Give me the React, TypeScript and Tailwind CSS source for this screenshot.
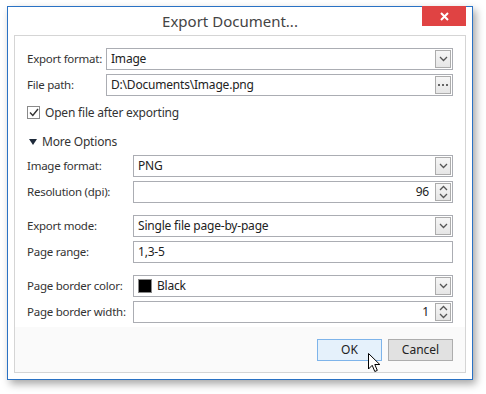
import type { ReactNode } from "react";

function Chevron() {
  return (
    <svg width="9" height="6" viewBox="0 0 9 6" className="text-[#555]">
      <path d="M1 1 L4.5 4.5 L8 1" fill="none" stroke="currentColor" strokeWidth="1.3" />
    </svg>
  );
}

function SideButton({ children }: { children: ReactNode }) {
  return (
    <div className="my-[1px] mr-[1px] flex w-[16px] items-center justify-center border border-[#acacac] bg-gradient-to-b from-[#f6f6f6] to-[#e6e6e6]">
      {children}
    </div>
  );
}

function Box({
  children,
  side,
  right,
}: {
  children?: ReactNode;
  side?: "combo" | "dots" | "spin";
  right?: boolean;
}) {
  return (
    <div className="flex h-[22px] flex-1 border border-[#abadb3] bg-white">
      <div
        className={
          "flex flex-1 items-center whitespace-nowrap px-[4px] text-[12px] tracking-[-0.2px] text-[#222] " +
          (right ? "justify-end pr-[6px]" : "")
        }
      >
        {children}
      </div>
      {side === "combo" && (
        <SideButton>
          <Chevron />
        </SideButton>
      )}
      {side === "dots" && (
        <SideButton>
          <span className="flex gap-[2px]">
            <span className="h-[2px] w-[2px] bg-[#666]" />
            <span className="h-[2px] w-[2px] bg-[#666]" />
            <span className="h-[2px] w-[2px] bg-[#666]" />
          </span>
        </SideButton>
      )}
      {side === "spin" && (
        <SideButton>
          <svg width="9" height="14" viewBox="0 0 9 14" className="text-[#555]">
            <path d="M1 5 L4.5 1.5 L8 5" fill="none" stroke="currentColor" strokeWidth="1.3" />
            <path d="M1 9 L4.5 12.5 L8 9" fill="none" stroke="currentColor" strokeWidth="1.3" />
          </svg>
        </SideButton>
      )}
    </div>
  );
}

function Row({
  label,
  labelW,
  children,
}: {
  label: string;
  labelW: string;
  children: ReactNode;
}) {
  return (
    <div className="flex h-[22px] items-center">
      <div className={labelW + " shrink-0 whitespace-nowrap text-[11.5px] tracking-[-0.25px] text-[#333]"}>
        {label}
      </div>
      {children}
    </div>
  );
}

export default function App() {
  return (
    <div
      className="min-h-[394px] bg-white pl-[7px] pt-[6px]"
      style={{ fontFamily: '"Segoe UI", "Noto Sans", sans-serif' }}
    >
      <div className="relative flex h-[374px] w-[466px] flex-col border border-[#2a72c4] bg-white px-[6px] pb-[6px] shadow-[3px_4px_8px_rgba(0,0,0,0.35)]">
        {/* title bar */}
        <div className="flex h-[28px] shrink-0 items-center justify-center pr-[20px] text-[15px] text-[#444]">
          Export Document...
        </div>
        <div className="absolute right-[6px] top-[-1px] flex h-[20px] w-[44px] items-center justify-center bg-[#e04343]">
          <svg width="9" height="9" viewBox="0 0 9 9">
            <path d="M1 1 L8 8 M8 1 L1 8" stroke="white" strokeWidth="2" />
          </svg>
        </div>

        {/* panel */}
        <div className="flex flex-1 flex-col border border-[#d5d5d5]">
          <div className="flex flex-col bg-white px-[12px] pb-[4px] pt-[12px]">
            <div className="flex flex-col gap-[4px]">
              <Row label="Export format:" labelW="w-[79px]">
                <Box side="combo">Image</Box>
              </Row>
              <Row label="File path:" labelW="w-[79px]">
                <Box side="dots">D:\Documents\Image.png</Box>
              </Row>
            </div>

            <div className="mt-[10px] flex h-[13px] items-center gap-[5px] text-[12px] tracking-[-0.2px] text-[#333]">
              <div className="flex h-[13px] w-[13px] items-center justify-center border border-[#8a8a8a] bg-white">
                <svg width="10" height="9" viewBox="0 0 10 9">
                  <path d="M1 4.5 L3.8 7.5 L9 1" fill="none" stroke="#333" strokeWidth="1.4" />
                </svg>
              </div>
              <span>Open file after exporting</span>
            </div>

            <div className="mt-[15px] flex h-[16px] items-center gap-[5px] text-[12px] tracking-[-0.2px] text-[#333]">
              <svg width="8" height="6" viewBox="0 0 8 6" className="ml-[2px]">
                <path d="M0 0 L8 0 L4 6 Z" fill="#1e2a3a" />
              </svg>
              <span>More Options</span>
            </div>

            <div className="mt-[5px] flex flex-col gap-[4px]">
              <Row label="Image format:" labelW="w-[106px]">
                <Box side="combo">PNG</Box>
              </Row>
              <Row label="Resolution (dpi):" labelW="w-[106px]">
                <Box side="spin" right>
                  96
                </Box>
              </Row>
            </div>

            <div className="mt-[12px] flex flex-col gap-[4px]">
              <Row label="Export mode:" labelW="w-[106px]">
                <Box side="combo">Single file page-by-page</Box>
              </Row>
              <Row label="Page range:" labelW="w-[106px]">
                <Box>1,3-5</Box>
              </Row>
            </div>

            <div className="mt-[12px] flex flex-col gap-[4px]">
              <Row label="Page border color:" labelW="w-[106px]">
                <Box side="combo">
                  <span className="mr-[5px] h-[14px] w-[14px] border border-[#888] bg-black" />
                  Black
                </Box>
              </Row>
              <Row label="Page border width:" labelW="w-[106px]">
                <Box side="spin" right>
                  1
                </Box>
              </Row>
            </div>
          </div>

          {/* buttons */}
          <div className="flex flex-1 items-center justify-end gap-[6px] bg-[#fafafa] px-[12px]">
            <div className="relative flex h-[22px] w-[65px] items-center justify-center border border-[#7eb4ea] bg-[#e5f1fb] text-[12px] text-[#222]">
              OK
              <svg
                width="13"
                height="20"
                viewBox="0 0 13 20"
                className="absolute left-[50px] top-[13px]"
              >
                <path
                  d="M0.5 0.5 L0.5 16 L4.2 12.3 L6.8 18.5 L9.3 17.4 L6.8 11.5 L11.8 11.5 Z"
                  fill="white"
                  stroke="black"
                  strokeWidth="1"
                  strokeLinejoin="round"
                />
              </svg>
            </div>
            <div className="flex h-[22px] w-[65px] items-center justify-center border border-[#adadad] bg-[#e1e1e1] text-[12px] text-[#222]">
              Cancel
            </div>
          </div>
        </div>
      </div>
    </div>
  );
}
